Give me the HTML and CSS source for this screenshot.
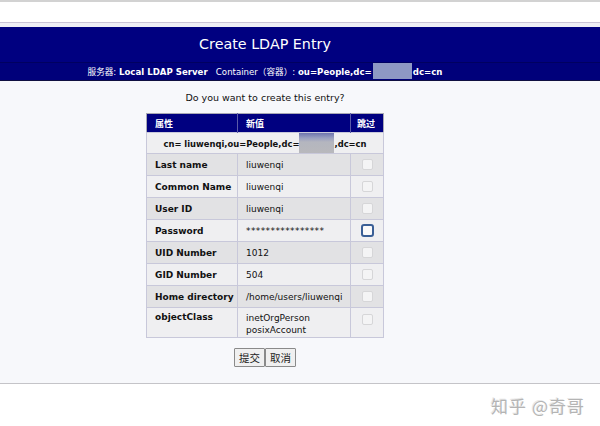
FILE: index.html
```html
<!DOCTYPE html>
<html lang="zh">
<head>
    <meta charset="UTF-8">
    <title>Create LDAP Entry</title>
    <link rel="stylesheet" href="styles.css">
</head>
<body>
    <div class="topbar"></div>
    <div class="strip"></div>

    <div class="header">
        <div class="inner">
            <h1 class="title">Create LDAP Entry</h1>
        </div>
        <div class="subtitle">
            <div class="inner">
                服务器: <b>Local LDAP Server</b>&nbsp;&nbsp; Container（容器）: <b>ou=People,dc=<span class="blur sub-blur"></span>dc=cn</b>
            </div>
        </div>
    </div>

    <div class="main">
        <div class="inner">
            <p class="question">Do you want to create this entry?</p>

            <table class="entry">
                <colgroup>
                    <col class="c-attr">
                    <col class="c-val">
                    <col class="c-skip">
                </colgroup>
                <thead>
                    <tr>
                        <th>属性</th>
                        <th>新值</th>
                        <th class="th-skip">跳过</th>
                    </tr>
                </thead>
                <tbody>
                    <tr class="dn-row">
                        <td colspan="3">cn= liuwenqi,ou=People,dc=<span class="blur dn-blur"></span>,dc=cn</td>
                    </tr>
                    <tr class="odd">
                        <td class="attr">Last name</td>
                        <td>liuwenqi</td>
                        <td class="skip"><span class="box"></span></td>
                    </tr>
                    <tr class="even">
                        <td class="attr">Common Name</td>
                        <td>liuwenqi</td>
                        <td class="skip"><span class="box"></span></td>
                    </tr>
                    <tr class="odd">
                        <td class="attr">User ID</td>
                        <td>liuwenqi</td>
                        <td class="skip"><span class="box"></span></td>
                    </tr>
                    <tr class="even">
                        <td class="attr">Password</td>
                        <td class="stars">****************</td>
                        <td class="skip"><span class="box focus"></span></td>
                    </tr>
                    <tr class="odd">
                        <td class="attr">UID Number</td>
                        <td>1012</td>
                        <td class="skip"><span class="box"></span></td>
                    </tr>
                    <tr class="even">
                        <td class="attr">GID Number</td>
                        <td>504</td>
                        <td class="skip"><span class="box"></span></td>
                    </tr>
                    <tr class="odd">
                        <td class="attr">Home directory</td>
                        <td>/home/users/liuwenqi</td>
                        <td class="skip"><span class="box"></span></td>
                    </tr>
                    <tr class="even top">
                        <td class="attr">objectClass</td>
                        <td>inetOrgPerson<br>posixAccount</td>
                        <td class="skip"><span class="box"></span></td>
                    </tr>
                </tbody>
            </table>

            <div class="buttons">
                <button class="btn">提交</button><button class="btn">取消</button>
            </div>
        </div>
    </div>

    <div class="watermark">知乎 @奇哥</div>
</body>
</html>
```

FILE: styles.css
```css
body {
    margin: 0;
    font-family: "DejaVu Sans", Verdana, "Noto Sans CJK SC", sans-serif;
    background-color: #ffffff;
    color: #111;
    position: relative;
    height: 426px;
    overflow: hidden;
}
.inner {
    width: 530px;
    text-align: center;
}
.topbar {
    height: 20px;
    border-top: 2px solid #d2d2d2;
    border-bottom: 1px solid #c9c3d6;
    background-color: #fff;
}
.strip {
    height: 4px;
    background-color: #eeeef5;
}
.header {
    background-color: #000080;
    color: white;
    border-bottom: 1px solid #101040;
}
.title {
    margin: 0;
    height: 35px;
    line-height: 35px;
    font-size: 14.3px;
    font-weight: normal;
}
.subtitle {
    height: 17px;
    line-height: 16px;
    font-size: 8.6px;
    background-color: #00007a;
    border-top: 1px solid #000060;
}
.blur {
    display: inline-block;
}
.sub-blur {
    width: 39px;
    height: 16px;
    vertical-align: -4px;
    background-color: #8e98c4;
    margin: 0 1px;
}
.main {
    background-color: #f7f8fb;
    height: 301px;
    border-bottom: 1px solid #c4c4c8;
    padding-top: 1px;
}
.question {
    font-size: 9.5px;
    margin: 10px 0 0 0;
    height: 21px;
}
table.entry {
    margin-left: 146px;
    width: 237px;
    table-layout: fixed;
    border-collapse: collapse;
    font-size: 9px;
    text-align: left;
    border: 1px solid #a8a8b4;
    white-space: nowrap;
}
col.c-attr {
    width: 91px;
}
col.c-val {
    width: 113px;
}
col.c-skip {
    width: 33px;
}
.entry th {
    background-color: #000080;
    color: white;
    font-weight: bold;
    height: 18px;
    padding: 0 8px;
    text-align: left;
    border-right: 1px solid #5a5aa8;
}
.entry th.th-skip {
    padding: 0 6px;
    border-right: none;
}
.entry td {
    height: 21px;
    padding: 0 8px;
    border: 1px solid #c8c8da;
}
.entry td.attr {
    font-weight: bold;
}
.entry tr.dn-row td {
    background-color: #efeff1;
    text-align: center;
    font-weight: bold;
    font-size: 8.4px;
    height: 19px;
    padding: 0;
}
.dn-blur {
    width: 35px;
    height: 20px;
    vertical-align: -6px;
    background: linear-gradient(#6e74ae 0px, #9aa0c0 5px, #b4b6bf 9px, #b8b8bc 100%);
}
.entry tr.odd td {
    background-color: #e2e2e4;
}
.entry tr.even td {
    background-color: #efeff1;
}
.entry tr.top td {
    vertical-align: top;
    height: 24px;
    padding-top: 4px;
    line-height: 12px;
}
.entry tr.top td.attr {
    padding-top: 3px;
}
.entry td.stars {
    letter-spacing: 0.4px;
}
.entry td.skip {
    text-align: center;
    padding: 0;
}
.entry tr.top td.skip {
    padding-top: 5px;
}
.box {
    display: inline-block;
    width: 9px;
    height: 9px;
    border: 1px solid #d6d6d8;
    border-radius: 2px;
    background-color: #f4f4f5;
    vertical-align: middle;
}
.box.focus {
    border: 2px solid #3a5f96;
    border-radius: 3px;
    background-color: #fafafa;
}
.buttons {
    margin-top: 10px;
    font-size: 0;
}
.btn {
    font-family: "Noto Sans CJK SC", sans-serif;
    font-size: 10.5px;
    height: 19px;
    padding: 0 4px;
    background-color: #f0f0f0;
    border: 1px solid #8a8a8a;
    border-radius: 1px;
    color: #222;
    line-height: 17px;
}
.watermark {
    position: absolute;
    right: 15px;
    top: 393px;
    font-family: "Noto Sans CJK SC", sans-serif;
    font-size: 17px;
    color: #b4b4b4;
    text-shadow: 1px 1px 0 #ffffff, -1px -1px 0 #e8e8e8;
    letter-spacing: 1px;
}
```
